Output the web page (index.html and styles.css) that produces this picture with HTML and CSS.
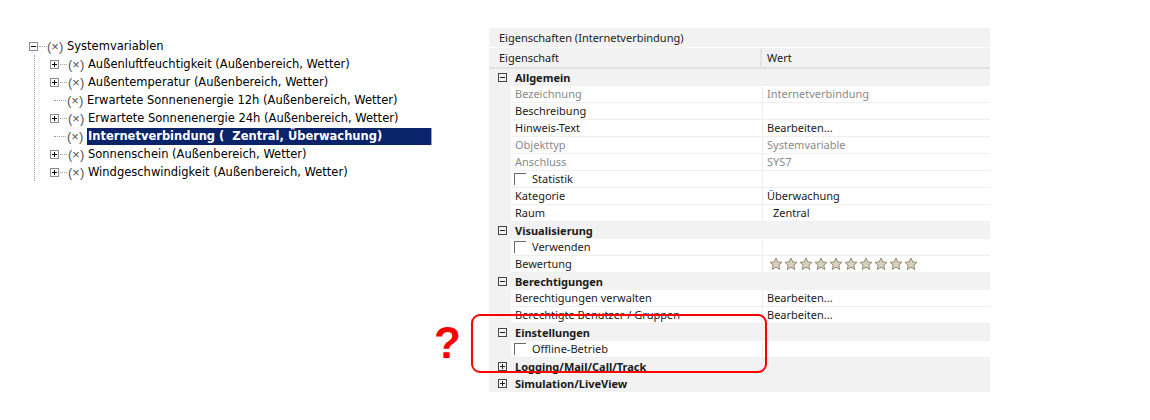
FILE: index.html
```html
<!DOCTYPE html>
<html lang="de">
<head>
<meta charset="utf-8">
<title>Systemvariablen</title>
<link rel="stylesheet" href="styles.css">
</head>
<body>
<div class="page">
  <div class="tree">
    <div class="node root">
      <span class="box minus"></span><span class="hdot"></span><span class="xicon">(×)</span><span class="label">Systemvariablen</span>
    </div>
    <div class="children">
      <div class="node"><span class="box plus"></span><span class="hdot"></span><span class="xicon">(×)</span><span class="label">Außenluftfeuchtigkeit (Außenbereich, Wetter)</span></div>
      <div class="node"><span class="box plus"></span><span class="hdot"></span><span class="xicon">(×)</span><span class="label">Außentemperatur (Außenbereich, Wetter)</span></div>
      <div class="node"><span class="leafdot"></span><span class="xicon">(×)</span><span class="label">Erwartete Sonnenenergie 12h (Außenbereich, Wetter)</span></div>
      <div class="node"><span class="box plus"></span><span class="hdot"></span><span class="xicon">(×)</span><span class="label">Erwartete Sonnenenergie 24h (Außenbereich, Wetter)</span></div>
      <div class="node"><span class="leafdot"></span><span class="xicon">(×)</span><span class="label selected">Internetverbindung (&nbsp; Zentral, Überwachung)</span></div>
      <div class="node"><span class="box plus"></span><span class="hdot"></span><span class="xicon">(×)</span><span class="label">Sonnenschein (Außenbereich, Wetter)</span></div>
      <div class="node"><span class="box plus"></span><span class="hdot"></span><span class="xicon">(×)</span><span class="label">Windgeschwindigkeit (Außenbereich, Wetter)</span></div>
    </div>
  </div>

  <div class="panel">
    <div class="title">Eigenschaften (Internetverbindung)</div>
    <div class="head"><div class="hname">Eigenschaft</div><div class="hval">Wert</div></div>

    <div class="row group"><div class="gut"><span class="gbox minus"></span></div><div class="gname">Allgemein</div></div>
    <div class="row"><div class="gut"></div><div class="name dis">Bezeichnung</div><div class="val dis">Internetverbindung</div></div>
    <div class="row"><div class="gut"></div><div class="name">Beschreibung</div><div class="val"></div></div>
    <div class="row"><div class="gut"></div><div class="name">Hinweis-Text</div><div class="val">Bearbeiten...</div></div>
    <div class="row"><div class="gut"></div><div class="name dis">Objekttyp</div><div class="val dis">Systemvariable</div></div>
    <div class="row"><div class="gut"></div><div class="name dis">Anschluss</div><div class="val dis">SYS7</div></div>
    <div class="row"><div class="gut"></div><div class="name"><span class="check"></span>Statistik</div><div class="val"></div></div>
    <div class="row"><div class="gut"></div><div class="name">Kategorie</div><div class="val">Überwachung</div></div>
    <div class="row"><div class="gut"></div><div class="name">Raum</div><div class="val indent">Zentral</div></div>

    <div class="row group"><div class="gut"><span class="gbox minus"></span></div><div class="gname">Visualisierung</div></div>
    <div class="row"><div class="gut"></div><div class="name"><span class="check"></span>Verwenden</div><div class="val"></div></div>
    <div class="row"><div class="gut"></div><div class="name">Bewertung</div><div class="val stars">
      <svg class="star" viewBox="0 0 14 14"><path d="M7 1 L8.8 5 L13 5.3 L9.8 8.2 L10.8 12.5 L7 10.2 L3.2 12.5 L4.2 8.2 L1 5.3 L5.2 5 Z"/></svg>
      <svg class="star" viewBox="0 0 14 14"><path d="M7 1 L8.8 5 L13 5.3 L9.8 8.2 L10.8 12.5 L7 10.2 L3.2 12.5 L4.2 8.2 L1 5.3 L5.2 5 Z"/></svg>
      <svg class="star" viewBox="0 0 14 14"><path d="M7 1 L8.8 5 L13 5.3 L9.8 8.2 L10.8 12.5 L7 10.2 L3.2 12.5 L4.2 8.2 L1 5.3 L5.2 5 Z"/></svg>
      <svg class="star" viewBox="0 0 14 14"><path d="M7 1 L8.8 5 L13 5.3 L9.8 8.2 L10.8 12.5 L7 10.2 L3.2 12.5 L4.2 8.2 L1 5.3 L5.2 5 Z"/></svg>
      <svg class="star" viewBox="0 0 14 14"><path d="M7 1 L8.8 5 L13 5.3 L9.8 8.2 L10.8 12.5 L7 10.2 L3.2 12.5 L4.2 8.2 L1 5.3 L5.2 5 Z"/></svg>
      <svg class="star" viewBox="0 0 14 14"><path d="M7 1 L8.8 5 L13 5.3 L9.8 8.2 L10.8 12.5 L7 10.2 L3.2 12.5 L4.2 8.2 L1 5.3 L5.2 5 Z"/></svg>
      <svg class="star" viewBox="0 0 14 14"><path d="M7 1 L8.8 5 L13 5.3 L9.8 8.2 L10.8 12.5 L7 10.2 L3.2 12.5 L4.2 8.2 L1 5.3 L5.2 5 Z"/></svg>
      <svg class="star" viewBox="0 0 14 14"><path d="M7 1 L8.8 5 L13 5.3 L9.8 8.2 L10.8 12.5 L7 10.2 L3.2 12.5 L4.2 8.2 L1 5.3 L5.2 5 Z"/></svg>
      <svg class="star" viewBox="0 0 14 14"><path d="M7 1 L8.8 5 L13 5.3 L9.8 8.2 L10.8 12.5 L7 10.2 L3.2 12.5 L4.2 8.2 L1 5.3 L5.2 5 Z"/></svg>
      <svg class="star" viewBox="0 0 14 14"><path d="M7 1 L8.8 5 L13 5.3 L9.8 8.2 L10.8 12.5 L7 10.2 L3.2 12.5 L4.2 8.2 L1 5.3 L5.2 5 Z"/></svg>
    </div></div>

    <div class="row group"><div class="gut"><span class="gbox minus"></span></div><div class="gname">Berechtigungen</div></div>
    <div class="row"><div class="gut"></div><div class="name">Berechtigungen verwalten</div><div class="val">Bearbeiten...</div></div>
    <div class="row"><div class="gut"></div><div class="name">Berechtigte Benutzer / Gruppen</div><div class="val">Bearbeiten...</div></div>

    <div class="row group"><div class="gut"><span class="gbox minus"></span></div><div class="gname">Einstellungen</div></div>
    <div class="row"><div class="gut"></div><div class="name"><span class="check"></span>Offline-Betrieb</div><div class="val"></div></div>
    <div class="row group"><div class="gut"><span class="gbox plus"></span></div><div class="gname">Logging/Mail/Call/Track</div></div>
    <div class="row group last"><div class="gut"><span class="gbox plus"></span></div><div class="gname">Simulation/LiveView</div></div>
  </div>

  <div class="mark">?</div>
  <div class="ring"></div>
</div>
</body>
</html>
```

FILE: styles.css
```css
html, body {
  margin: 0;
  padding: 0;
  background: #ffffff;
}

.page {
  position: relative;
  display: flex;
  align-items: flex-start;
  width: 1150px;
  height: 420px;
  overflow: hidden;
}

/* ---------- tree ---------- */
.tree {
  box-sizing: border-box;
  width: 489px;
  padding: 37px 0 0 29px;
  font-family: "DejaVu Sans", Verdana, sans-serif;
  font-size: 11.5px;
  color: #000;
}

.node {
  display: flex;
  align-items: center;
  height: 18px;
  white-space: nowrap;
}

.box {
  position: relative;
  box-sizing: border-box;
  width: 9px;
  height: 9px;
  border: 1px solid #8c8c8c;
  background: #fff;
  flex: none;
}
.box::before {
  content: "";
  position: absolute;
  left: 1px;
  top: 3px;
  width: 5px;
  height: 1px;
  background: #000;
}
.box.plus::after {
  content: "";
  position: absolute;
  left: 3px;
  top: 1px;
  width: 1px;
  height: 5px;
  background: #000;
}

.hdot {
  width: 8px;
  height: 0;
  border-top: 1px dotted #a0a0a0;
  margin-left: 1px;
  flex: none;
}

.leafdot {
  width: 12px;
  height: 0;
  border-top: 1px dotted #a0a0a0;
  margin-left: 4px;
  flex: none;
}

.xicon {
  margin-left: 0;
  color: #555555;
  width: 20px;
  flex: none;
  font-family: "Liberation Sans", Arial, sans-serif;
  font-size: 13px;
  line-height: 17px;
}

.label {
  line-height: 17px;
}

.label.selected {
  box-sizing: border-box;
  width: 345px;
  height: 17px;
  padding-left: 1px;
  background: #0a246a;
  color: #fff;
  font-weight: bold;
  border-right: 1px solid #c8a050;
}

.children {
  margin-left: 5px;
  border-left: 1px dotted #a0a0a0;
  padding-left: 15px;
}
.children .hdot { width: 7px; }
.children .xicon { width: 20px; margin-left: 1px; }

/* ---------- property grid ---------- */
.panel {
  margin-top: 28px;
  width: 501px;
  font-family: "Noto Sans", "Open Sans", sans-serif;
  font-size: 11px;
  color: #1a1a1a;
  background: #f2f2f2;
}

.title {
  height: 20px;
  line-height: 20px;
  padding-left: 10px;
  border-bottom: 1px solid #ffffff;
  box-sizing: border-box;
  color: #222;
}

.head {
  display: grid;
  grid-template-columns: 273px 228px;
  height: 21px;
  box-sizing: border-box;
  border-bottom: 2px solid #e2e2e2;
}
.hname {
  padding-left: 10px;
  line-height: 19px;
  border-right: 2px solid #e6e6e6;
}
.hval {
  padding-left: 5px;
  line-height: 19px;
}

.row {
  display: grid;
  grid-template-columns: 22px 251px 228px;
  height: 17px;
}

.gut { background: #f2f2f2; display: flex; align-items: center; }

.name, .val {
  background: #fff;
  border-bottom: 1px solid #f0f0f0;
  line-height: 16px;
  height: 17px;
  box-sizing: border-box;
  white-space: nowrap;
  overflow: hidden;
}
.name { padding-left: 4px; display: flex; align-items: center; }
.val { padding-left: 4px; border-left: 1px solid #ececec; }
.val.indent { padding-left: 10px; }

.dis { color: #8a8a8a; }

.check {
  box-sizing: border-box;
  width: 12px;
  height: 12px;
  border-top: 1px solid #6a6a6a;
  border-left: 1px solid #6a6a6a;
  margin: 0 6px 0 -1px;
  flex: none;
}

.group .gname {
  grid-column: 2 / 4;
  font-weight: bold;
  line-height: 17px;
  padding-left: 4px;
  color: #1a1a1a;
}

.gbox {
  position: relative;
  box-sizing: border-box;
  width: 9px;
  height: 9px;
  border: 1px solid #444;
  margin-left: 9px;
}
.gbox::before {
  content: "";
  position: absolute;
  left: 1px;
  top: 3px;
  width: 5px;
  height: 1px;
  background: #222;
}
.gbox.plus::after {
  content: "";
  position: absolute;
  left: 3px;
  top: 1px;
  width: 1px;
  height: 5px;
  background: #222;
}

.stars {
  display: flex;
  align-items: center;
  gap: 1px;
  padding-left: 6px;
}
.star {
  width: 14px;
  height: 14px;
  flex: none;
}
.star path {
  fill: #d6d0bd;
  stroke: #958c74;
  stroke-width: 1;
  stroke-linejoin: round;
}

/* ---------- annotation ---------- */
.mark {
  position: absolute;
  left: 434px;
  top: 318px;
  font-family: "Liberation Sans", Arial, sans-serif;
  font-weight: bold;
  font-size: 44px;
  line-height: 50px;
  color: #ff0000;
}

.ring {
  position: absolute;
  left: 471px;
  top: 314px;
  width: 296px;
  height: 59px;
  box-sizing: border-box;
  border: 2px solid #ff0000;
  border-radius: 9px;
}
```
